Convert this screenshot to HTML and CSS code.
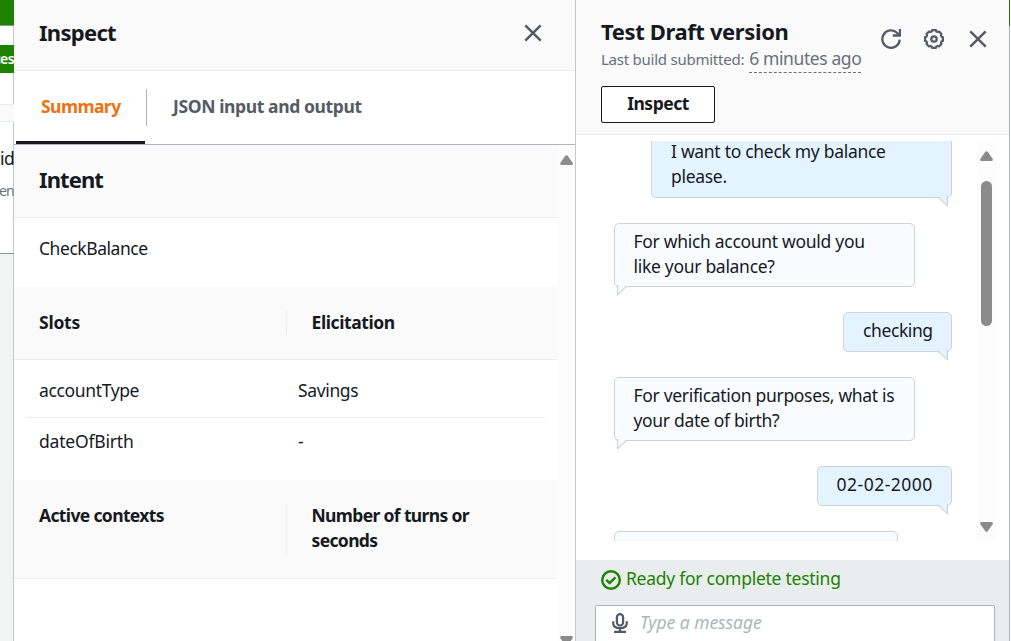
FILE: index.html
```html
<!DOCTYPE html>
<html lang="en">
<head>
<meta charset="utf-8">
<title>Test Draft version</title>
<link rel="stylesheet" href="styles.css">
</head>
<body>
<div class="app">
  <aside class="page-edge">
    <div class="edge-nav"></div>
    <div class="edge-flash"><span>ces</span></div>
    <div class="edge-band"></div>
    <div class="edge-card">
      <div class="edge-title">id</div>
      <div class="edge-desc">en</div>
    </div>
    <div class="edge-rest"></div>
  </aside>

  <section class="inspect">
    <header class="inspect-header">
      <h2 class="heading">Inspect</h2>
      <svg class="close" width="18" height="18" viewBox="0 0 18 18"><path d="M1.3 1.3 16.7 16.7M16.7 1.3 1.3 16.7"/></svg>
    </header>
    <nav class="tabs">
      <div class="tab tab-active"><span>Summary</span></div>
      <div class="tab-divider"></div>
      <div class="tab tab-json">JSON input and output</div>
    </nav>
    <div class="inspect-body">
      <div class="inspect-content">
        <div class="band intent-band"><h2 class="heading intent">Intent</h2></div>
        <div class="intent-value">CheckBalance</div>
        <div class="band columns slots-head">
          <div class="col-a">Slots</div>
          <div class="col-b"><div class="label">Elicitation</div></div>
        </div>
        <div class="rows">
          <div class="row first"><span class="name">accountType</span><span>Savings</span></div>
          <div class="row"><span class="name birth">dateOfBirth</span><span>-</span></div>
        </div>
        <div class="band columns contexts-head">
          <div class="col-a">Active contexts</div>
          <div class="col-b"><div class="label">Number of turns or seconds</div></div>
        </div>
      </div>
      <div class="scroll-track">
        <svg width="13" height="10" viewBox="0 0 13 10"><path d="M5.3.8Q6.5-.5 7.7.8L12.6 7.7Q13.3 10 11.5 10H1.5Q-.3 10 .4 7.7Z"/></svg>
        <svg width="13" height="10" viewBox="0 0 13 10"><path d="M5.3 9.2Q6.5 10.5 7.7 9.2L12.6 2.3Q13.3 0 11.5 0H1.5Q-.3 0 .4 2.3Z"/></svg>
      </div>
    </div>
  </section>

  <section class="test">
    <header class="test-header">
      <div class="test-title">
        <h2 class="heading draft">Test Draft version</h2>
        <p class="build"><span class="build-label">Last build submitted:</span> <span class="ago">6 minutes ago</span></p>
        <button class="inspect-button">Inspect</button>
      </div>
      <div class="tools">
        <svg width="20" height="20" viewBox="0 0 20 20"><path d="M18.7 10.6A8.7 8.7 0 1 1 16.2 4L18 6M11.8 6.5H19V0" class="stroke"/></svg>
        <svg width="20" height="20" viewBox="-10 -10 20 20"><path class="stroke gear" d="M8.9-1.9V1.9L7.6 2.3 6.9 3.9 7.5 5 5 7.5 3.9 6.9 2.3 7.6 1.9 8.9H-1.9L-2.3 7.6-3.9 6.9-5 7.5-7.5 5-6.9 3.9-7.6 2.3-8.9 1.9V-1.9L-7.6-2.3-6.9-3.9-7.5-5-5-7.5-3.9-6.9-2.3-7.6-1.9-8.9H1.9L2.3-7.6 3.9-6.9 5-7.5 7.5-5 6.9-3.9 7.6-2.3Z"/><circle class="stroke" r="2.7"/></svg>
        <svg class="close" width="18" height="18" viewBox="0 0 18 18"><path d="M1.3 1.3 16.7 16.7M16.7 1.3 1.3 16.7"/></svg>
      </div>
    </header>

    <div class="chat">
      <div class="messages">
        <div class="bubble user wide first-message">I want to check my balance please.<svg class="tail" width="11" height="11" viewBox="0 0 11 11"><path class="tail-fill" d="M0 0 9 9V0Z"/><path class="tail-line" d="M0 1.2 9.4 9.6V0"/></svg></div>
        <div class="bubble bot wide">For which account would you like your balance?<svg class="tail" width="11" height="11" viewBox="0 0 11 11"><path class="tail-fill" d="M11 0 2 9V0Z"/><path class="tail-line" d="M10.5 1.2 1.6 9.6V0"/></svg></div>
        <div class="bubble user short">checking<svg class="tail" width="11" height="11" viewBox="0 0 11 11"><path class="tail-fill" d="M0 0 9 9V0Z"/><path class="tail-line" d="M0 1.2 9.4 9.6V0"/></svg></div>
        <div class="bubble bot wide verify">For verification purposes, what is<br>your date of birth?<svg class="tail" width="11" height="11" viewBox="0 0 11 11"><path class="tail-fill" d="M11 0 2 9V0Z"/><path class="tail-line" d="M10.5 1.2 1.6 9.6V0"/></svg></div>
        <div class="bubble user date">02-02-2000<svg class="tail" width="11" height="11" viewBox="0 0 11 11"><path class="tail-fill" d="M0 0 9 9V0Z"/><path class="tail-line" d="M0 1.2 9.4 9.6V0"/></svg></div>
        <div class="bubble bot next"></div>
      </div>
      <div class="chat-scroll">
        <svg width="13" height="10" viewBox="0 0 13 10"><path d="M5.3.8Q6.5-.5 7.7.8L12.6 7.7Q13.3 10 11.5 10H1.5Q-.3 10 .4 7.7Z"/></svg>
        <div class="thumb"></div>
        <svg width="13" height="10" viewBox="0 0 13 10"><path d="M5.3 9.2Q6.5 10.5 7.7 9.2L12.6 2.3Q13.3 0 11.5 0H1.5Q-.3 0 .4 2.3Z"/></svg>
      </div>
    </div>

    <footer class="composer">
      <div class="status">
        <svg width="20" height="20" viewBox="0 0 20 20"><circle cx="10" cy="10" r="8.8"/><path d="M5.3 9.8 8.7 13.1 14.4 7.4"/></svg>
        <span>Ready for complete testing</span>
      </div>
      <div class="message-input">
        <svg width="16" height="20" viewBox="0 0 16 20"><rect x="4.9" y="1.1" width="6.2" height="11.4" rx="3.1"/><path d="M1.2 8.2V10Q1.2 15.2 8 15.2T14.8 10V8.2M8 15.2V19M2 18.8H14"/></svg>
        <span>Type a message</span>
      </div>
    </footer>
  </section>
  <div class="right-edge"><div class="right-nav"></div></div>
</div>
</body>
</html>
```

FILE: styles.css
```css
* { box-sizing: border-box; }

body {
  margin: 0;
  width: 1011px;
  height: 641px;
  overflow: hidden;
  background: #fff;
  color: #16191f;
  font: 17.5px/25px "Noto Sans", sans-serif;
  letter-spacing: -0.3px;
}

h2, p { margin: 0; }
svg { display: block; flex: none; }

.app { display: flex; height: 641px; }

/* Sliver of the page behind the panels */
.page-edge {
  width: 14px;
  flex: none;
  display: flex;
  flex-direction: column;
  box-shadow: inset -1px 0 #c3c8c9;
  overflow: hidden;
}
.edge-nav { height: 26px; background: #1d8102; border-bottom: 1px solid #879596; }
.edge-flash {
  height: 28px;
  margin-top: 19px;
  background: #1d8102;
  color: #fff;
  font-size: 14px;
  font-weight: 600;
  line-height: 27px;
  letter-spacing: -0.6px;
  display: flex;
  justify-content: flex-end;
}
.edge-band {
  height: 18px;
  margin-top: 31px;
  background: #fafafa;
  border: solid #eaeded;
  border-width: 1px 0;
}
.edge-card { height: 132px; padding-top: 24px; border-bottom: 1px solid #879596; }
.edge-title { line-height: 25px; letter-spacing: -0.5px; }
.edge-desc { margin: 7px 0 0 -1px; font-size: 14px; letter-spacing: -0.8px; color: #687078; }
.edge-rest { flex: 1; background: #f2f3f3; box-shadow: inset -1px 0 #c3c8c9; }

.heading { font-size: 22px; line-height: 28px; font-weight: 700; letter-spacing: -0.7px; }
.intent { letter-spacing: -0.9px; }
.draft { letter-spacing: -0.38px; }

.close path { fill: none; stroke: #545b64; stroke-width: 2.5; }

/* Inspect panel */
.inspect { width: 562px; flex: none; display: flex; flex-direction: column; border-right: 1px solid #c3c8c9; }
.inspect-header {
  height: 71px;
  flex: none;
  display: flex;
  align-items: flex-start;
  justify-content: space-between;
  padding: 18px 33px 0 25px;
  background: #fafafa;
  border-bottom: 1px solid #eaeded;
}
.inspect-header .close { margin-top: 6px; }
.tabs {
  height: 74px;
  flex: none;
  display: flex;
  border-bottom: 1px solid #aab7b8;
  padding-left: 2px;
  font-weight: 700;
  letter-spacing: -0.38px;
}
.tab { padding-top: 23px; }
.tab-active { width: 129px; height: 73px; padding-left: 25px; color: #ec7211; border-bottom: 3px solid #16191f; letter-spacing: -0.55px; }
.tab-divider { width: 1px; height: 37px; margin: 18px 0 0 1px; background: #aab7b8; }
.tab-json { padding-left: 26px; color: #545b64; }

.inspect-body { flex: 1; min-height: 0; display: flex; }
.inspect-content { width: 543px; }
.band { background: #fafafa; border-bottom: 1px solid #eaeded; }
.intent-band { height: 73px; padding: 20px 25px 0; }
.intent-value { height: 69px; padding: 18px 25px 0; letter-spacing: -0.45px; }
.columns { display: flex; padding: 24px 0; font-weight: 700; }
.slots-head { height: 73px; }
.contexts-head { height: 99px; }
.col-a { width: 272px; padding-left: 25px; margin-top: -1px; letter-spacing: -0.24px; }
.col-b { width: 230px; padding-left: 24.5px; border-left: 1px solid #eaeded; letter-spacing: -0.4px; }
.col-b .label { margin-top: -1px; }
.contexts-head .col-a, .contexts-head .col-b { letter-spacing: -0.64px; }
.rows { height: 120px; padding: 0 12px; }
.row { display: flex; padding: 11px 0 0 13px; letter-spacing: -0.36px; }
.row.first { height: 58px; padding-top: 18px; border-bottom: 1px solid #eaeded; }
.name { width: 259px; }
.birth { letter-spacing: -0.2px; }

.scroll-track {
  flex: 1;
  display: flex;
  flex-direction: column;
  justify-content: space-between;
  padding: 10px 0 0 3px;
  background: #fcfcfc;
}
.scroll-track svg:last-child { margin-bottom: -5px; }
.scroll-track path, .chat-scroll path { fill: #8b8b8b; }

/* Test panel */
.test { width: 433px; flex: none; display: flex; flex-direction: column; }
.test-header {
  height: 135px;
  flex: none;
  display: flex;
  justify-content: space-between;
  padding: 17px 22px 0 25px;
  background: #fafafa;
  border-bottom: 1px solid #eaeded;
}
.build { display: flex; gap: 5px; align-items: baseline; height: 41px; padding-top: 1px; color: #687078; white-space: nowrap; }
.build-label { font-size: 15px; letter-spacing: -0.24px; }
.ago { height: 27px; border-bottom: 1px dashed #687078; letter-spacing: -0.4px; }
.inspect-button {
  display: block;
  width: 114px;
  height: 37px;
  padding: 0 0 2px;
  background: #fff;
  border: 1px solid #16191f;
  border-radius: 2px;
  color: #16191f;
  font: 700 17.5px/33px "Noto Sans", sans-serif;
  letter-spacing: -0.5px;
}
.tools { display: flex; align-items: center; gap: 23px; height: 44px; }
.tools .close { margin-left: 2px; }
.stroke { fill: none; stroke: #545b64; stroke-width: 2.3; }
.gear { stroke-width: 2.2; stroke-linejoin: round; }

.chat { height: 425px; flex: none; display: flex; padding-top: 6px; }
.messages {
  width: 401px;
  height: 400px;
  padding: 0 25px 0 38px;
  overflow: hidden;
  display: flex;
  flex-direction: column;
  justify-content: flex-end;
  gap: 25px;
}
.bubble {
  position: relative;
  flex: none;
  min-height: 40px;
  padding: 5px 18.5px;
  border: 1px solid #d0d3d6;
  border-radius: 5px;
}
.bubble.wide { width: 301px; height: 64px; }
.bubble.first-message { padding: 4px 19px; }
.verify { white-space: nowrap; letter-spacing: -0.32px; }
.user { align-self: flex-end; background: #e3f3ff; }
.bot { align-self: flex-start; background: #f9fcff; }
.short { width: 109px; padding-left: 19px; letter-spacing: -0.4px; }
.date { width: 135px; white-space: nowrap; letter-spacing: 0.5px; }
.next { width: 284px; height: 40px; margin-bottom: -30px; }
.tail { position: absolute; top: calc(100% - 1px); }
.user .tail { right: 2px; }
.bot .tail { left: 1px; }
.user .tail-fill { fill: #e3f3ff; }
.bot .tail-fill { fill: #f9fcff; }
.tail-line { fill: none; stroke: #d0d3d6; stroke-width: 1.2; }

.chat-scroll { width: 19px; height: 400px; padding: 10px 0 9px 3px; background: #fcfcfc; display: flex; flex-direction: column; }
.thumb { width: 11px; height: 145px; margin: 20px 0 auto 1px; border-radius: 6px; background: #8b8b8b; }

.composer { flex: 1; background: #e9eded; padding: 6px 14px 0 19px; }
.status { display: flex; gap: 5px; height: 39px; padding-left: 6px; color: #1d8102; letter-spacing: -0.26px; }
.status svg { margin-top: 4px; fill: none; stroke: #1d8102; stroke-width: 2.4; }
.message-input {
  display: flex;
  gap: 12px;
  height: 42px;
  padding: 4px 16px;
  background: #fff;
  border: 1px solid #aab7b8;
  border-radius: 2px;
  color: #aab7b8;
  font-style: italic;
  letter-spacing: -0.05px;
}
.message-input svg { margin-top: 3px; fill: none; stroke: #545b64; stroke-width: 2.2; }

.right-edge { width: 2px; border-left: 1px solid #aab7b8; }
.right-nav { width: 1px; height: 26px; margin-left: -1px; background: #1d8102; }
```
